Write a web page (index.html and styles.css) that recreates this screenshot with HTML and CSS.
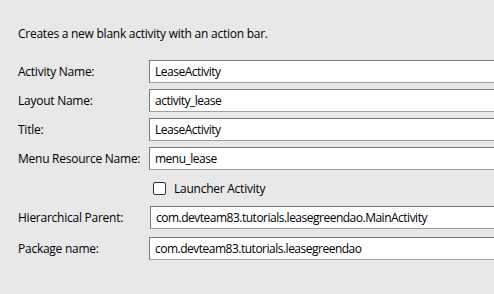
FILE: index.html
```html
<!DOCTYPE html>
<html lang="en">
  <head>
    <meta charset="UTF-8" />
    <title>New Blank Activity</title>
    <link rel="stylesheet" href="styles.css">
  </head>
  <body>
    <div class="wizard">
      <p class="description">Creates a new blank activity with an action bar.</p>
      <div class="form">
        <div class="row">
          <label for="activityName">Activity Name:</label>
          <input type="text" id="activityName" value="LeaseActivity" />
        </div>
        <div class="row">
          <label for="layoutName">Layout Name:</label>
          <input type="text" id="layoutName" value="activity_lease" />
        </div>
        <div class="row">
          <label for="title">Title:</label>
          <input type="text" id="title" value="LeaseActivity" />
        </div>
        <div class="row">
          <label for="menuName">Menu Resource Name:</label>
          <input type="text" id="menuName" value="menu_lease" />
        </div>
        <div class="row check-row">
          <span class="checkbox"></span>
          <span class="check-label">Launcher Activity</span>
        </div>
        <div class="row parent-row">
          <label for="parent">Hierarchical Parent:</label>
          <input type="text" id="parent" class="shifted" value="com.devteam83.tutorials.leasegreendao.MainActivity" />
        </div>
        <div class="row package-row">
          <label for="packageName">Package name:</label>
          <input type="text" id="packageName" value="com.devteam83.tutorials.leasegreendao" />
        </div>
      </div>
    </div>
  </body>
</html>
```

FILE: styles.css
```css
html,
body {
  margin: 0;
  height: 100%;
  overflow: hidden;
  background-color: #e8e8e8;
}
body {
  font-family: "Open Sans", "Noto Sans", sans-serif;
  font-size: 12px;
  letter-spacing: -0.25px;
  color: #000;
}
.wizard {
  padding: 26px 0 0 18px;
}
.description {
  margin: 0;
  line-height: 16px;
}
.form {
  margin-top: 18px;
}
.row {
  display: flex;
  align-items: center;
  height: 23px;
  margin-bottom: 6px;
}
label {
  width: 131px;
  flex-shrink: 0;
}
input {
  flex-shrink: 0;
  width: 345px;
  height: 23px;
  box-sizing: border-box;
  margin: 0;
  padding: 0 5px;
  font: inherit;
  letter-spacing: -0.5px;
  color: #000;
  background-color: #fff;
  border: 1px solid #7a7a7a;
  border-right: none;
  border-bottom-color: #a0a0a0;
  outline: none;
}
input.shifted {
  width: 344px;
  margin-left: 1px;
}
.check-row {
  height: 13px;
  margin: 12px 0 11px 135px;
}
.checkbox {
  width: 11px;
  height: 11px;
  border: 1px solid #333;
  border-radius: 2px;
  background-color: #fff;
  margin-right: 8px;
}
.package-row {
  margin-top: 8px;
}
```
